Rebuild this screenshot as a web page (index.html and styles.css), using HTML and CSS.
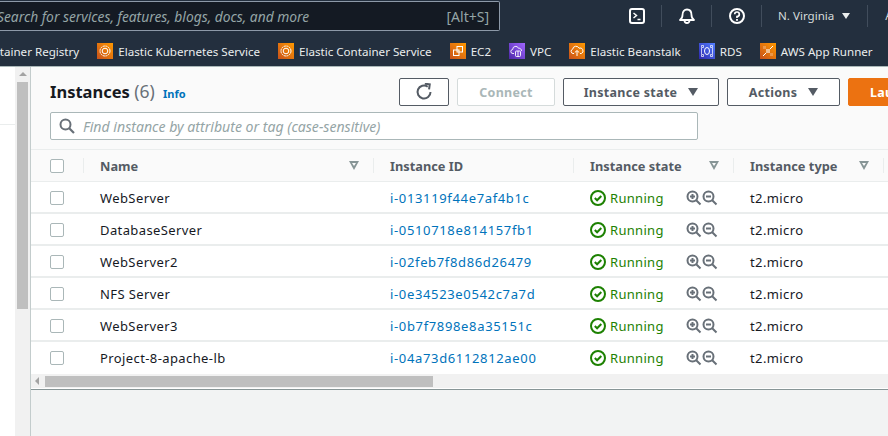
FILE: index.html
```html
<!doctype html>
<html lang="en">
<head>
	<meta charset="UTF-8">
	<title>Instances | EC2 Management Console</title>
	<link rel="stylesheet" href="styles.css">
</head>
<body>
	<header class="topbar">
		<div class="search"><span class="search-text">Search for services, features, blogs, docs, and more</span><span class="search-key">[Alt+S]</span></div>
		<div class="tools">
			<svg class="tool" viewBox="0 0 16 16"><rect x="1" y="1" width="14" height="14" rx="2" fill="none" stroke="#fff" stroke-width="2"/><path d="M4.5 5l3 2.5-3 2.5M8.5 11.5h3" fill="none" stroke="#fff" stroke-width="1.5"/></svg>
			<i class="sep"></i>
			<svg class="tool" viewBox="0 0 16 16"><path d="M1 12c1.500-1 2.500-2 2.500-5C3.500 3.500 5.500 1.500 8 1.500s4.500 2 4.500 5.500c0 3 1 4 2.500 5z" fill="none" stroke="#fff" stroke-width="1.800" stroke-linejoin="round"/><path d="M5.500 12.500a2.500 2.500 0 0 0 5 0" fill="none" stroke="#fff" stroke-width="1.800"/></svg>
			<i class="sep"></i>
			<svg class="tool" viewBox="0 0 16 16"><circle cx="8" cy="8" r="7" fill="none" stroke="#fff" stroke-width="2"/><path d="M5.700 6.300A2.300 2.300 0 1 1 8 8.600v1.400" fill="none" stroke="#fff" stroke-width="1.700"/><rect x="7.100" y="11" width="1.800" height="1.800" fill="#fff"/></svg>
			<i class="sep"></i>
			<span class="region">N. Virginia</span>
			<i class="caret"></i>
			<i class="sep sep-last"></i>
			<span class="account">Admin</span>
		</div>
	</header>

	<nav class="favs">
		<a class="fav fav-first">Elastic Container Registry</a>
		<a class="fav"><span class="svc orange"><svg viewBox="0 0 16 16"><circle cx="8" cy="8" r="5" fill="none" stroke="#fff" stroke-width="1" stroke-dasharray="2 .6"/><circle cx="8" cy="8" r="2.800" fill="none" stroke="#fff" stroke-width="1"/></svg></span>Elastic Kubernetes Service</a>
		<a class="fav"><span class="svc orange"><svg viewBox="0 0 16 16"><circle cx="8" cy="8" r="5" fill="none" stroke="#fff" stroke-width="1" stroke-dasharray="2 .6"/><circle cx="8" cy="8" r="2.800" fill="none" stroke="#fff" stroke-width="1"/></svg></span>Elastic Container Service</a>
		<a class="fav"><span class="svc orange"><svg viewBox="0 0 16 16"><rect x="7" y="3.500" width="5.500" height="5.500" fill="none" stroke="#fff" stroke-width="1"/><rect x="3.500" y="7" width="5.500" height="5.500" fill="none" stroke="#fff" stroke-width="1"/></svg></span>EC2</a>
		<a class="fav"><span class="svc purple"><svg viewBox="0 0 16 16"><path d="M5 10.500H4a2 2 0 0 1-.3-4 3 3 0 0 1 5.800-1.200 2.500 2.500 0 0 1 3 2.700" fill="none" stroke="#fff" stroke-width=".9"/><rect x="6.500" y="8" width="5" height="5.500" rx="1" fill="none" stroke="#fff" stroke-width=".9"/><path d="M9 8v5.500" stroke="#fff" stroke-width=".9"/></svg></span>VPC</a>
		<a class="fav"><span class="svc orange"><svg viewBox="0 0 16 16"><path d="M5 10.500H4a2.200 2.200 0 0 1-.3-4.300 3.300 3.300 0 0 1 6.300-1 2.600 2.600 0 0 1 2.300 5.300H11" fill="none" stroke="#fff" stroke-width="1"/><path d="M8 13V8M5.800 9.500L8 7.500l2.200 2" fill="none" stroke="#fff" stroke-width="1"/></svg></span>Elastic Beanstalk</a>
		<a class="fav"><span class="svc blue"><svg viewBox="0 0 16 16"><ellipse cx="8" cy="8" rx="2.500" ry="3.500" fill="none" stroke="#fff" stroke-width="1"/><path d="M2.500 5v6M13.500 5v6M2.500 2.500h2v2h-2zM11.500 2.500h2v2h-2zM2.500 11.500h2v2h-2zM11.500 11.500h2v2h-2z" fill="none" stroke="#fff" stroke-width=".7"/></svg></span>RDS</a>
		<a class="fav"><span class="svc orange"><svg viewBox="0 0 16 16"><path d="M6 6h4v4H6z" fill="#fff" opacity=".55"/><path d="M3 13l3-3M10 6l3-3" stroke="#fff" stroke-width="1"/><path d="M10 10h3v3h-3zM3 3h3v3H3z" fill="#fff" opacity=".25"/></svg></span>AWS App Runner</a>
	</nav>

	<div class="page">
		<aside class="side">
			<div class="side-pane"><div class="side-line"></div></div>
			<div class="vscroll"><i class="arrow-up"></i><div class="vthumb"></div></div>
		</aside>

		<main class="main">
			<section class="panel">
				<div class="head">
					<h1 class="title">Instances <span class="count">(6)</span> <a class="info">Info</a></h1>
					<button class="btn btn-refresh"><svg width="18" height="18" viewBox="0 0 18 18"><path d="M15.500 9A6.500 6.500 0 1 1 12.700 3.700" fill="none" stroke="#545b64" stroke-width="2"/><path d="M9.500 1l5 0 0 5" fill="none" stroke="#545b64" stroke-width="2" transform="rotate(8 12 3)"/></svg></button>
					<button class="btn btn-off">Connect</button>
					<button class="btn btn-state">Instance state<i class="btn-caret"></i></button>
					<button class="btn btn-actions">Actions<i class="btn-caret"></i></button>
					<button class="btn btn-launch">Launch instances</button>
				</div>
				<div class="find">
					<svg width="16" height="16" viewBox="0 0 16 16"><circle cx="6.500" cy="6.500" r="5" fill="none" stroke="#687078" stroke-width="2"/><path d="M10 10l5 5" stroke="#687078" stroke-width="2.200"/></svg>
					<span class="find-text">Find instance by attribute or tag (case-sensitive)</span>
				</div>
			</section>

			<div class="thead row-grid">
				<div class="cell"><span class="check"></span></div>
				<div class="cell th">Name<i class="filter"></i></div>
				<div class="cell th">Instance ID</div>
				<div class="cell th">Instance state<i class="filter"></i></div>
				<div class="cell th">Instance type<i class="filter"></i></div>
				<div class="cell th"></div>
			</div>

			<div class="tr row-grid">
				<div class="cell"><span class="check"></span></div>
				<div class="cell td">WebServer</div>
				<div class="cell td"><a class="link">i-013119f44e7af4b1c</a></div>
				<div class="cell td"><svg class="ok" viewBox="0 0 16 16"><circle cx="8" cy="8" r="7" /><path d="M4.800 8l2.300 2.300 4.200-4.300"/></svg><span class="running">Running</span><svg class="zoom" viewBox="0 0 16 16"><circle cx="6.500" cy="6.500" r="5"/><path d="M10.200 10.200l4.300 4.300M4 6.500h5M6.500 4v5"/></svg><svg class="zoom" viewBox="0 0 16 16"><circle cx="6.500" cy="6.500" r="5"/><path d="M10.200 10.200l4.300 4.300M4 6.500h5"/></svg></div>
				<div class="cell td">t2.micro</div>
				<div class="cell"></div>
			</div>
			<div class="tr row-grid">
				<div class="cell"><span class="check"></span></div>
				<div class="cell td">DatabaseServer</div>
				<div class="cell td"><a class="link">i-0510718e814157fb1</a></div>
				<div class="cell td"><svg class="ok" viewBox="0 0 16 16"><circle cx="8" cy="8" r="7" /><path d="M4.800 8l2.300 2.300 4.200-4.300"/></svg><span class="running">Running</span><svg class="zoom" viewBox="0 0 16 16"><circle cx="6.500" cy="6.500" r="5"/><path d="M10.200 10.200l4.300 4.300M4 6.500h5M6.500 4v5"/></svg><svg class="zoom" viewBox="0 0 16 16"><circle cx="6.500" cy="6.500" r="5"/><path d="M10.200 10.200l4.300 4.300M4 6.500h5"/></svg></div>
				<div class="cell td">t2.micro</div>
				<div class="cell"></div>
			</div>
			<div class="tr row-grid">
				<div class="cell"><span class="check"></span></div>
				<div class="cell td">WebServer2</div>
				<div class="cell td"><a class="link">i-02feb7f8d86d26479</a></div>
				<div class="cell td"><svg class="ok" viewBox="0 0 16 16"><circle cx="8" cy="8" r="7" /><path d="M4.800 8l2.300 2.300 4.200-4.300"/></svg><span class="running">Running</span><svg class="zoom" viewBox="0 0 16 16"><circle cx="6.500" cy="6.500" r="5"/><path d="M10.200 10.200l4.300 4.300M4 6.500h5M6.500 4v5"/></svg><svg class="zoom" viewBox="0 0 16 16"><circle cx="6.500" cy="6.500" r="5"/><path d="M10.200 10.200l4.300 4.300M4 6.500h5"/></svg></div>
				<div class="cell td">t2.micro</div>
				<div class="cell"></div>
			</div>
			<div class="tr row-grid">
				<div class="cell"><span class="check"></span></div>
				<div class="cell td">NFS Server</div>
				<div class="cell td"><a class="link">i-0e34523e0542c7a7d</a></div>
				<div class="cell td"><svg class="ok" viewBox="0 0 16 16"><circle cx="8" cy="8" r="7" /><path d="M4.800 8l2.300 2.300 4.200-4.300"/></svg><span class="running">Running</span><svg class="zoom" viewBox="0 0 16 16"><circle cx="6.500" cy="6.500" r="5"/><path d="M10.200 10.200l4.300 4.300M4 6.500h5M6.500 4v5"/></svg><svg class="zoom" viewBox="0 0 16 16"><circle cx="6.500" cy="6.500" r="5"/><path d="M10.200 10.200l4.300 4.300M4 6.500h5"/></svg></div>
				<div class="cell td">t2.micro</div>
				<div class="cell"></div>
			</div>
			<div class="tr row-grid">
				<div class="cell"><span class="check"></span></div>
				<div class="cell td">WebServer3</div>
				<div class="cell td"><a class="link">i-0b7f7898e8a35151c</a></div>
				<div class="cell td"><svg class="ok" viewBox="0 0 16 16"><circle cx="8" cy="8" r="7" /><path d="M4.800 8l2.300 2.300 4.200-4.300"/></svg><span class="running">Running</span><svg class="zoom" viewBox="0 0 16 16"><circle cx="6.500" cy="6.500" r="5"/><path d="M10.200 10.200l4.300 4.300M4 6.500h5M6.500 4v5"/></svg><svg class="zoom" viewBox="0 0 16 16"><circle cx="6.500" cy="6.500" r="5"/><path d="M10.200 10.200l4.300 4.300M4 6.500h5"/></svg></div>
				<div class="cell td">t2.micro</div>
				<div class="cell"></div>
			</div>
			<div class="tr tr-last row-grid">
				<div class="cell"><span class="check"></span></div>
				<div class="cell td">Project-8-apache-lb</div>
				<div class="cell td"><a class="link">i-04a73d6112812ae00</a></div>
				<div class="cell td"><svg class="ok" viewBox="0 0 16 16"><circle cx="8" cy="8" r="7" /><path d="M4.800 8l2.300 2.300 4.200-4.300"/></svg><span class="running">Running</span><svg class="zoom" viewBox="0 0 16 16"><circle cx="6.500" cy="6.500" r="5"/><path d="M10.200 10.200l4.300 4.300M4 6.500h5M6.500 4v5"/></svg><svg class="zoom" viewBox="0 0 16 16"><circle cx="6.500" cy="6.500" r="5"/><path d="M10.200 10.200l4.300 4.300M4 6.500h5"/></svg></div>
				<div class="cell td">t2.micro</div>
				<div class="cell"></div>
			</div>

			<div class="hscroll"><i class="arrow-left"></i><div class="hthumb"></div></div>
			<div class="foot"></div>
		</main>
	</div>
</body>
</html>
```

FILE: styles.css
```css
*{margin:0;padding:0;box-sizing:border-box;}
html,body{height:436px;overflow:hidden;}
body{font-family:"Noto Sans",sans-serif;font-size:13px;color:#16191f;background:#fff;width:888px;}
i{display:block;font-style:normal;}

/* top bar */
.topbar{
	height:31px;
	display:flex;
	background:#232f3e;
}
.search{
	width:500px;
	height:30px;
	margin-top:1px;
	display:flex;
	align-items:center;
	justify-content:space-between;
	padding:1px 10px 0 0;
	background:#141a23;
	border:solid 1px #8d99a8;
	border-left:0;
	border-radius:0 2px 2px 0;
	color:#95a5a6;
	font-size:14px;
	white-space:nowrap;
}
.search-text{font-size:13.800px;font-style:italic;margin-left:-3px;}
.tools{
	flex:1;
	display:flex;
	align-items:center;
	padding-left:129px;
	color:#d5dbdb;
	white-space:nowrap;
	overflow:hidden;
}
.tool{width:16px;height:16px;flex:none;}
.sep{width:1px;height:22px;background:#414d5c;margin:0 17px 0 16px;flex:none;}
.sep-last{margin:0 17px 0 17px;}
.region{font-size:11.600px;margin-left:-1px;}
.caret{
	width:0;height:0;
	margin-left:8px;
	border:solid transparent;
	border-width:6px 4px 0;
	border-top-color:#eaeded;
}
.account{font-size:12px;}

/* favourites */
.favs{
	height:36px;
	display:flex;
	align-items:center;
	gap:18px;
	background:#232f3e;
	border-bottom:1px solid #aab7b8;
	white-space:nowrap;
	overflow:hidden;
	padding-top:5px;
}
.fav{
	display:flex;
	align-items:center;
	gap:5px;
	color:#eaeded;
	font-size:11.600px;
	flex:none;
}
.fav-first{margin-left:-59px;}
.svc{width:16px;height:16px;flex:none;display:block;}
.svc svg{display:block;width:16px;height:16px;}
.orange{background:linear-gradient(45deg,#c8511b,#ff9900);}
.purple{background:linear-gradient(45deg,#4d27a8,#a166ff);}
.blue{background:linear-gradient(45deg,#2e27ad,#527fff);}

/* page */
.page{display:flex;height:369px;}
.side{width:31px;flex:none;display:flex;border-right:1px solid #c3cccc;}
.side-pane{width:15px;background:#fff;padding-top:57px;}
.side-line{height:1px;background:#eaeded;}
.vscroll{width:15px;background:#f1f1f1;padding:5px 2px 0;}
.arrow-up{
	width:0;height:0;
	margin:0 auto;
	border:solid transparent;
	border-width:0 4px 4px;
	border-bottom-color:#a3a3a3;
}
.vthumb{height:227px;margin-top:6px;background:#bfbfbf;}
.main{flex:1;min-width:0;overflow:hidden;background:#fff;}

.panel{
	height:83px;
	background:#fafafa;
	padding:11px 0 0 19px;
	border-bottom:1px solid #eaeded;
}
.head{display:flex;gap:8px;height:28px;align-items:center;white-space:nowrap;}
.title{font-size:16.500px;font-weight:700;width:341px;flex:none;line-height:26px;}
.count{font-size:17.500px;font-weight:400;color:#687078;}
.info{font-size:11px;font-weight:700;color:#0073bb;margin-left:4px;}
.btn{
	height:28px;
	flex:none;
	display:flex;
	align-items:center;
	justify-content:center;
	font:700 12.500px "Noto Sans",sans-serif;
	letter-spacing:.3px;
	color:#545b64;
	background:#fff;
	border:solid 1px #545b64;
	border-radius:2px;
}
.btn-refresh{width:50px;}
.btn-off{width:98px;color:#aab7b8;border-color:#d5dbdb;}
.btn-state{width:156px;}
.btn-actions{width:113px;}
.btn-launch{width:150px;justify-content:flex-start;padding-left:21px;color:#fff;background:#ec7211;border-color:#ec7211;}
.btn-caret{
	width:0;height:0;
	margin-left:11px;
	border:solid transparent;
	border-width:8px 5.500px 0;
	border-top-color:#545b64;
}
.find{
	width:648px;
	height:28px;
	margin-top:6px;
	display:flex;
	align-items:center;
	gap:8px;
	padding-left:8px;
	background:#fff;
	border:solid 1px #aab7b8;
	border-radius:2px;
}
.find-text{font-style:italic;font-size:14.100px;color:#95a5a6;}

/* table */
.row-grid{display:grid;grid-template-columns:53px 290px 200px 160px 150px 1fr;}
.thead{height:32px;background:#fafafa;border-bottom:1px solid #eaeded;}
.tr{height:32px;padding-top:2px;border-bottom:2px solid #eaeded;background:#fff;}
.tr-last{padding-top:0;border-bottom:0;}
.cell{display:flex;align-items:center;padding-left:19px;position:relative;}
.th,.td{padding-left:16px;padding-right:15px;}
.th{font-weight:700;font-size:12.800px;color:#545b64;}
.td{letter-spacing:.4px;}
.th::before{content:"";position:absolute;left:-1px;top:8px;height:15px;width:1px;background:#eaeded;}
.check{
	width:14px;height:14px;
	background:#fff;
	border:solid 1px #aab7b8;
	border-radius:2px;
}
.filter{
	width:0;height:0;
	margin-left:auto;
	border:solid transparent;
	border-width:9px 5.500px 0;
	border-top-color:#879596;
	position:relative;
}
.filter::after{
	content:"";
	position:absolute;
	left:-2px;top:-7px;
	width:0;height:0;
	border:solid transparent;
	border-width:3px 2px 0;
	border-top-color:#fafafa;
}
.link{color:#0073bb;letter-spacing:.65px;}
.ok{width:16px;height:16px;flex:none;margin-right:4px;fill:none;stroke:#1d8102;stroke-width:2;}
.running{width:76px;color:#1d8102;flex:none;letter-spacing:.3px;}
.zoom{width:16px;height:16px;flex:none;fill:none;stroke:#687078;stroke-width:2;}

.hscroll{height:14px;background:#f1f1f1;display:flex;align-items:center;padding-left:4px;}
.arrow-left{
	width:0;height:0;
	border:solid transparent;
	border-width:4px 4px 4px 0;
	border-right-color:#a3a3a3;
}
.hthumb{width:388px;height:11px;margin-left:6px;background:#bfbfbf;}
.foot{height:100%;margin-top:1px;background:#f2f3f3;border-top:1px solid #879596;}
```
